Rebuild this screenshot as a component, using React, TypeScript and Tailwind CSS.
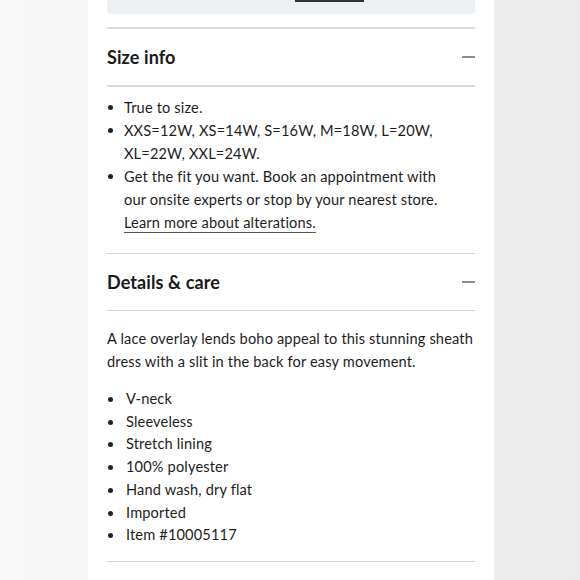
const sizeInfo = [
  'True to size.',
  'XXS=12W, XS=14W, S=16W, M=18W, L=20W, XL=22W, XXL=24W.',
]

const details = [
  'V-neck',
  'Sleeveless',
  'Stretch lining',
  '100% polyester',
  'Hand wash, dry flat',
  'Imported',
  'Item #10005117',
]

function Minus() {
  return <div className="w-[13px] h-[1.5px] bg-[#8c8c8c]" />
}

function SectionHeader({ title }: { title: string }) {
  return (
    <div className="flex items-center justify-between h-[56px]">
      <h2 className="text-[18px] font-bold text-[#191919] tracking-[0.1px]">{title}</h2>
      <Minus />
    </div>
  )
}

function Dot() {
  return <span className="w-[5px] h-[5px] rounded-full bg-[#222] shrink-0 mt-[9px]" />
}

export default function App() {
  return (
    <div
      className="w-[580px] h-[580px] overflow-hidden flex bg-gradient-to-r from-[#f8f8f8] via-[#f1f1f1] to-[#ececec]"
      style={{ fontFamily: 'Lato, "Open Sans", sans-serif' }}
    >
      <div className="ml-[88px] w-[406px] h-full bg-white px-[19px] text-[#1d1d1d]">
        {/* tail of the block above */}
        <div className="h-[14px] bg-[#eef1f4] rounded-b-[3px] relative">
          <div className="absolute left-[188px] top-0 w-[69px] h-[2px] bg-[#333]" />
        </div>

        <div className="mt-[13px] h-[2px] bg-[#dcdcdc]" />
        <SectionHeader title="Size info" />
        <div className="h-[2px] bg-[#dcdcdc]" />

        <ul className="pt-[9px] pb-[19px] text-[14.6px] leading-[23px] tracking-[0.15px]">
          {sizeInfo.map((t) => (
            <li key={t} className="flex gap-[11px] pl-[1px]">
              <Dot />
              <span className="max-w-[320px]">{t}</span>
            </li>
          ))}
          <li className="flex gap-[11px] pl-[1px]">
            <Dot />
            <span className="max-w-[325px]">
              Get the fit you want. Book an appointment with our onsite experts or stop by your nearest store.
              <span className="block w-fit underline underline-offset-[4px] decoration-[#555]">
                Learn more about alterations.
              </span>
            </span>
          </li>
        </ul>

        <div className="h-px bg-[#d4d4d4]" />
        <SectionHeader title="Details & care" />
        <div className="h-px bg-[#d4d4d4]" />

        <p className="pt-[16px] text-[14.6px] leading-[23px] tracking-[0.15px]">
          A lace overlay lends boho appeal to this stunning sheath dress with a slit in the back for easy movement.
        </p>

        <ul className="pt-[15px] pb-[14px] text-[14.6px] leading-[22.7px] tracking-[0.15px]">
          {details.map((t) => (
            <li key={t} className="flex gap-[13px] pl-[1px]">
              <Dot />
              <span>{t}</span>
            </li>
          ))}
        </ul>

        <div className="h-px bg-[#d4d4d4]" />
      </div>
    </div>
  )
}
